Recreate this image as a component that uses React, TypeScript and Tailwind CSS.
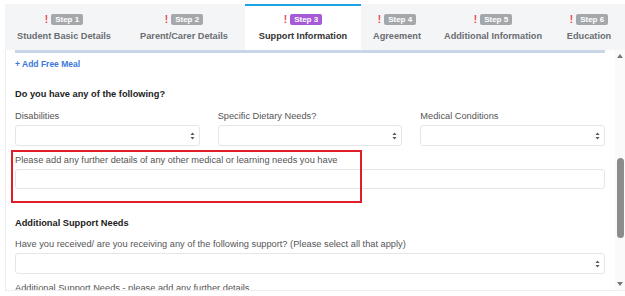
import { ReactNode } from 'react';

const tabs = [
  { step: 1, label: 'Student Basic Details', w: 'w-[118px]' },
  { step: 2, label: 'Parent/Carer Details', w: 'w-[122px]' },
  { step: 3, label: 'Support Information', w: 'w-[116px]', active: true },
  { step: 4, label: 'Agreement', w: 'w-[72px]' },
  { step: 5, label: 'Additional Information', w: 'w-[120px]' },
  { step: 6, label: 'Education', w: 'flex-1' },
];

function UpDown() {
  return (
    <svg width="5" height="8" viewBox="0 0 5 8" className="shrink-0">
      <path d="M2.5 0.5 L4.5 3 L0.5 3 Z" fill="#555" />
      <path d="M2.5 7.5 L4.5 5 L0.5 5 Z" fill="#555" />
    </svg>
  );
}

function Select({ className = '' }: { className?: string }) {
  return (
    <div className={`h-[21px] rounded-[3px] border border-[#e3e6ea] bg-white flex items-center justify-end pr-[4px] ${className}`}>
      <UpDown />
    </div>
  );
}

function Label({ children, className = '' }: { children: ReactNode; className?: string }) {
  return <div className={`text-[9.25px] leading-[12px] text-[#555] ${className}`}>{children}</div>;
}

function Heading({ children, className = '' }: { children: ReactNode; className?: string }) {
  return <div className={`text-[9.25px] leading-[12px] font-bold text-[#222] ${className}`}>{children}</div>;
}

export default function App() {
  return (
    <div className="w-[625px] h-[296px] bg-white overflow-hidden font-['Liberation_Sans',Arial,sans-serif]">
      {/* Step tabs */}
      <div className="mt-[4px] ml-[5px] h-[46px] flex bg-[#f4f5f7]">
        {tabs.map((t) => (
          <div
            key={t.step}
            className={`${t.w} flex flex-col items-center ${
              t.active ? 'bg-white border-t-2 border-[#1ba3e3] pt-[8px]' : 'pt-[10px]'
            }`}
          >
            <div className="flex items-center gap-[3px] h-[11px]">
              <span className="text-[#e8464a] text-[10px] leading-[11px] font-bold">!</span>
              <span
                className={`px-[4px] rounded-[2px] text-white text-[8px] leading-[11px] font-bold ${
                  t.active ? 'bg-[#a65ad8]' : 'bg-[#a5a8ab]'
                }`}
              >
                Step {t.step}
              </span>
            </div>
            <div
              className={`mt-[5px] text-[9.2px] leading-[12px] font-bold whitespace-nowrap ${
                t.active ? 'text-[#333]' : 'text-[#6b6e72]'
              }`}
            >
              {t.label}
            </div>
          </div>
        ))}
      </div>

      {/* Scroll area */}
      <div className="relative ml-[5px] h-[241px] border-l border-b border-[#eceef0] flex">
        <div className="flex-1 pl-[9px] pr-[10px] overflow-hidden">
          <div className="h-[3px] bg-[#c9d6e7]" />
          <div className="mt-[5px] text-[8.5px] leading-[12px] font-bold text-[#3b78dc]">+ Add Free Meal</div>

          <Heading className="mt-[18px]">Do you have any of the following?</Heading>

          <div className="grid grid-cols-3 gap-x-[18px] mt-[10px]">
            <div>
              <Label>Disabilities</Label>
              <Select className="mt-[3px]" />
            </div>
            <div>
              <Label>Specific Dietary Needs?</Label>
              <Select className="mt-[3px]" />
            </div>
            <div>
              <Label>Medical Conditions</Label>
              <Select className="mt-[3px]" />
            </div>
          </div>

          <Label className="mt-[8px]">Please add any further details of any other medical or learning needs you have</Label>
          <div className="mt-[3px] h-[20px] rounded-[3px] border border-[#e3e6ea]" />

          <Heading className="mt-[28px]">Additional Support Needs</Heading>
          <Label className="mt-[9px]">Have you received/ are you receiving any of the following support? (Please select all that apply)</Label>
          <Select className="mt-[3px]" />
          <Label className="mt-[8px]">Additional Support Needs - please add any further details</Label>
        </div>

        {/* Scrollbar */}
        <div className="w-[10px] bg-[#fafafa] flex flex-col items-center justify-between py-[4px]">
          <svg width="6" height="4" viewBox="0 0 6 4">
            <path d="M3 0 L6 4 L0 4 Z" fill="#777" />
          </svg>
          <div className="w-full flex-1 relative">
            <div className="absolute left-[2px] right-[1px] top-[100px] h-[80px] rounded-full bg-[#8c8c8c]" />
          </div>
          <svg width="6" height="4" viewBox="0 0 6 4">
            <path d="M0 0 L6 0 L3 4 Z" fill="#777" />
          </svg>
        </div>

        {/* Red highlight annotation */}
        <div className="absolute left-[5px] top-[100px] w-[351px] h-[53px] border-2 border-[#e01e2a]" />
      </div>
    </div>
  );
}
